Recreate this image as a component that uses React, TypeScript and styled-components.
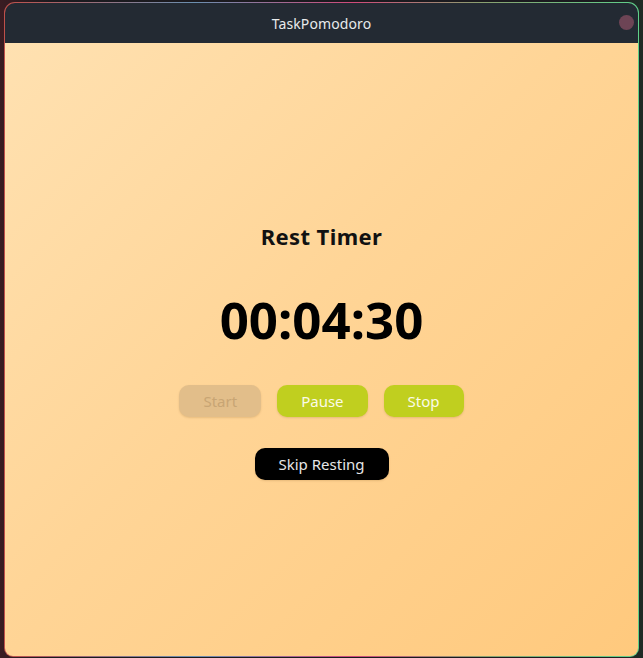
import React from "react";
import styled, { createGlobalStyle } from "styled-components";

const Global = createGlobalStyle`
  html, body {
    margin: 0;
    padding: 0;
    width: 643px;
    height: 658px;
    overflow: hidden;
    background: linear-gradient(90deg, #3a1c22 0%, #1b1a1f 8%, #1b1a1f 92%, #1f2b25 100%);
    font-family: "Noto Sans", "Open Sans", sans-serif;
  }
`;

const Frame = styled.div`
  box-sizing: border-box;
  margin: 2px 4px 1px 4px;
  width: 635px;
  height: 655px;
  padding: 1px;
  border-radius: 11px 11px 9px 9px;
  background: linear-gradient(90deg, #c0504a 0%, #6a8fb0 30%, #d04a7a 55%, #8aa070 75%, #5fd08a 100%);
  display: flex;
`;

const Window = styled.div`
  flex: 1;
  display: flex;
  flex-direction: column;
  border-radius: 10px 10px 8px 8px;
  overflow: hidden;
`;

const TitleBar = styled.div`
  height: 40px;
  flex: none;
  background: #232a33;
  display: flex;
  align-items: center;
  justify-content: center;
  position: relative;
`;

const Title = styled.span`
  color: #e8eaec;
  font-size: 14px;
  letter-spacing: 0.1px;
`;

const CloseDot = styled.span`
  position: absolute;
  right: 4px;
  top: 12px;
  width: 15px;
  height: 15px;
  border-radius: 50%;
  background: #6d4455;
`;

const Content = styled.main`
  flex: 1;
  background: linear-gradient(135deg, #ffe1b1 0%, #ffd597 45%, #ffc97d 100%);
  display: flex;
  flex-direction: column;
  align-items: center;
  justify-content: center;
  padding-top: 3px;
`;

const Heading = styled.h1`
  margin: 0;
  font-size: 22px;
  line-height: 26px;
  font-weight: 700;
  letter-spacing: 0.4px;
  color: #111;
`;

const Clock = styled.div`
  margin-top: 39px;
  font-size: 51px;
  line-height: 62px;
  font-weight: 700;
  color: #000;
`;

const Row = styled.div`
  margin-top: 35px;
  display: flex;
  gap: 16px;
`;

const Button = styled.button<{ $variant: "primary" | "disabled" | "dark" }>`
  height: 32px;
  padding: 0 24px;
  border: none;
  border-radius: 10px;
  font-family: "Noto Sans", "Open Sans", sans-serif;
  font-size: 15px;
  cursor: pointer;
  box-shadow: 0 1px 2px rgba(120, 80, 20, 0.18);
  background: ${(p) =>
    p.$variant === "primary" ? "#c0cf1f" : p.$variant === "dark" ? "#000" : "#e2be8a"};
  color: ${(p) =>
    p.$variant === "primary" ? "#fbfbe8" : p.$variant === "dark" ? "#e6e6e6" : "#c8a574"};
`;

const SkipWrap = styled.div`
  margin-top: 31px;
`;

export default function App() {
  return (
    <>
      <Global />
      <Frame>
        <Window>
          <TitleBar>
            <Title>TaskPomodoro</Title>
            <CloseDot />
          </TitleBar>
          <Content>
            <Heading>Rest Timer</Heading>
            <Clock>00:04:30</Clock>
            <Row>
              <Button $variant="disabled" disabled>Start</Button>
              <Button $variant="primary">Pause</Button>
              <Button $variant="primary">Stop</Button>
            </Row>
            <SkipWrap>
              <Button $variant="dark">Skip Resting</Button>
            </SkipWrap>
          </Content>
        </Window>
      </Frame>
    </>
  );
}
